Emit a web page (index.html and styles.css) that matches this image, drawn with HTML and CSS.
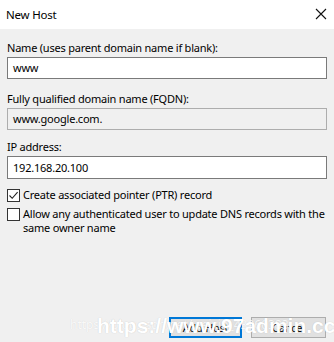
FILE: index.html
```html
<!DOCTYPE html>
<html>
<head>
<meta charset="utf-8">
<link rel="stylesheet" href="styles.css">
</head>
<body>
<div class="dialog">
  <div class="titlebar">
    <span class="title">New Host</span>
    <svg class="close" width="12" height="12" viewBox="0 0 12 12"><path d="M1 1 L11 11 M11 1 L1 11" stroke="#111" stroke-width="1.1" fill="none"/></svg>
  </div>
  <div class="content">
    <div class="group">
      <div class="label">Name (uses parent domain name if blank):</div>
      <div class="field">www</div>
    </div>
    <div class="group">
      <div class="label">Fully qualified domain name (FQDN):</div>
      <div class="field disabled">www.google.com.</div>
    </div>
    <div class="group group-ip">
      <div class="label">IP address:</div>
      <div class="field tall">192.168.20.100</div>
    </div>
    <div class="check">
      <span class="box"><svg width="11" height="11" viewBox="0 0 11 11"><path d="M1.5 5.5 L4.2 8.3 L9.6 2.2" stroke="#222" stroke-width="1.1" fill="none"/></svg></span>
      <span class="ctext">Create associated pointer (PTR) record</span>
    </div>
    <div class="check check2">
      <span class="box"></span>
      <span class="ctext">Allow any authenticated user to update DNS records with the same owner name</span>
    </div>
    <div class="spacer"></div>
    <div class="buttons">
      <div class="btn default">Add Host</div>
      <div class="btn cancel">Cancel</div>
    </div>
  </div>
  <div class="wm-faint">https://blog.csdn.net/weixin_43960383</div>
  <div class="wm-bold">https://www.97admin.cc</div>
</div>
</body>
</html>
```
FILE: styles.css
```css
html, body {
  margin: 0;
  padding: 0;
}
body {
  width: 334px;
  height: 342px;
  overflow: hidden;
  font-family: "Noto Sans", "Open Sans", sans-serif;
  font-size: 11px;
  letter-spacing: -0.22px;
  color: #000;
}
.dialog {
  position: relative;
  width: 334px;
  height: 342px;
  background: #f0f0f0;
  display: flex;
  flex-direction: column;
  overflow: hidden;
}
.titlebar {
  height: 29px;
  background: #fff;
  display: flex;
  align-items: center;
  justify-content: space-between;
  padding: 0 7px 0 6px;
  flex-shrink: 0;
}
.title {
  font-size: 11.5px;
  color: #000;
  margin-top: -1px;
}
.close {
  margin-top: -1px;
}
.content {
  flex: 1;
  display: flex;
  flex-direction: column;
  padding: 11px 7px 4px 7px;
}
.group {
  display: flex;
  flex-direction: column;
  gap: 2px;
  margin-bottom: 12px;
}
.group-ip {
  margin-top: -3px;
  margin-bottom: 9px;
}
.label {
  line-height: 15px;
  height: 15px;
}
.field {
  height: 20px;
  line-height: 20px;
  border: 1px solid #7a7a7a;
  background: #fff;
  padding-left: 5px;
}
.field.disabled {
  background: #f0f0f0;
  border-color: #adadad;
}
.field.tall {
  height: 21px;
  line-height: 21px;
}
.check {
  display: flex;
  align-items: flex-start;
  gap: 3px;
  margin-bottom: 5px;
}
.box {
  width: 13px;
  height: 13px;
  box-sizing: border-box;
  border: 1px solid #333;
  background: #fff;
  flex-shrink: 0;
  display: flex;
  align-items: center;
  justify-content: center;
  margin-top: 1px;
}
.ctext {
  line-height: 14px;
}
.spacer {
  flex: 1;
}
.buttons {
  display: flex;
  justify-content: flex-end;
  gap: 9px;
  padding-right: 1px;
}
.btn {
  height: 21px;
  box-sizing: border-box;
  display: flex;
  align-items: center;
  justify-content: center;
  background: #e1e1e1;
  border: 1px solid #adadad;
  font-size: 11px;
}
.btn.default {
  width: 73px;
  border: 2px solid #0078d7;
}
.btn.cancel {
  width: 75px;
}
.wm-faint {
  position: absolute;
  left: 70px;
  top: 316px;
  font-size: 12px;
  letter-spacing: 0;
  color: rgba(255,255,255,0.85);
  white-space: nowrap;
  text-shadow: 0 0 1px rgba(0,0,0,0.12);
}
.wm-bold {
  position: absolute;
  left: 97px;
  top: 314px;
  font-family: "Liberation Sans", Arial, sans-serif;
  font-weight: bold;
  font-size: 21px;
  letter-spacing: 0;
  color: #fff;
  white-space: nowrap;
  text-shadow: 0 0 1px rgba(0,0,0,0.2);
}
```
